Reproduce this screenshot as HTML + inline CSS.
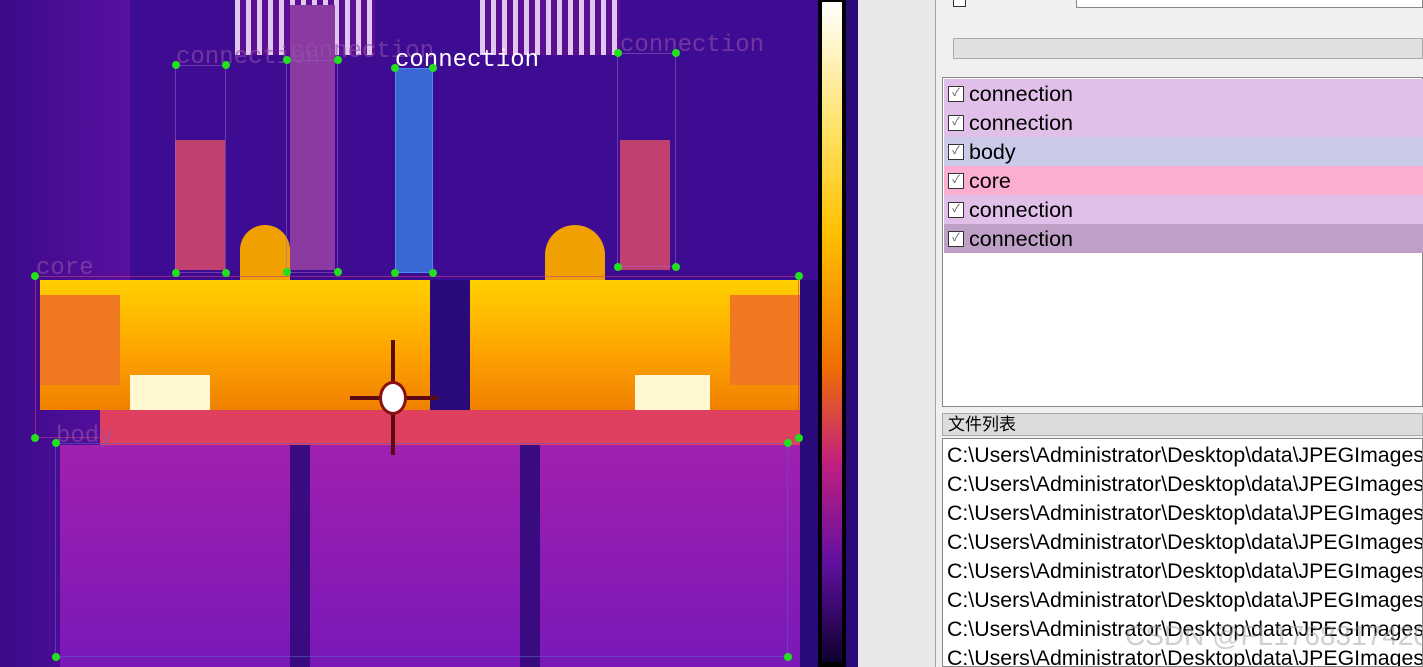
<!DOCTYPE html>
<html><head><meta charset="utf-8"><style>
*{margin:0;padding:0;box-sizing:border-box}
html,body{width:1423px;height:667px;overflow:hidden}
body{background:#f0f0f0;position:relative;font-family:"Liberation Sans","Noto Sans CJK SC",sans-serif}
.a{position:absolute}
.img{left:0;top:0;width:858px;height:667px;background:#2a0a78;overflow:hidden}
.d{position:absolute;width:8px;height:8px;border-radius:50%;background:#22e01e;margin:-4px 0 0 -4px}
.lbl{position:absolute;font-family:"Liberation Mono",monospace;font-size:24px;color:rgba(150,80,170,.6);white-space:nowrap}
.row{position:absolute;left:944px;width:479px;height:29px;font-size:21.5px;line-height:30px;padding-left:25px;color:#000}
.row:before{content:"✓";position:absolute;left:4px;top:7px;width:14px;height:14px;border:1px solid #333;background:#fff;font-size:11px;line-height:13px;text-align:center;color:#555}
.f{position:absolute;left:4px;font-size:21.3px;line-height:29px;white-space:nowrap;color:#000}
</style></head><body>
<div class="a img">
 <div class="a" style="left:0;top:0;width:130px;height:667px;background:linear-gradient(90deg,#3a0a8a,#5a10a0)"></div>
 <div class="a" style="left:130px;top:0;width:690px;height:280px;background:#3e0c92"></div>
 <div class="a" style="left:235px;top:0;width:140px;height:55px;background:repeating-linear-gradient(90deg,#e0c8f0 0 5px,#5a1090 5px 11px)"></div>
 <div class="a" style="left:480px;top:0;width:140px;height:55px;background:repeating-linear-gradient(90deg,#e0c8f0 0 5px,#5a1090 5px 11px)"></div>
 <div class="a" style="left:175px;top:140px;width:50px;height:130px;background:#c04070"></div>
 <div class="a" style="left:620px;top:140px;width:50px;height:130px;background:#c04070"></div>
 <div class="a" style="left:290px;top:5px;width:45px;height:265px;background:#8a3aa0"></div>
 <div class="a" style="left:240px;top:225px;width:50px;height:60px;background:#f0a000;border-radius:25px 25px 0 0"></div>
 <div class="a" style="left:545px;top:225px;width:60px;height:60px;background:#f0a000;border-radius:30px 30px 0 0"></div>
 <div class="a" style="left:40px;top:280px;width:390px;height:130px;background:linear-gradient(180deg,#ffd000,#ffa800 50%,#f08000);"></div>
 <div class="a" style="left:470px;top:280px;width:330px;height:130px;background:linear-gradient(180deg,#ffd000,#ffa800 50%,#f08000);"></div>
 <div class="a" style="left:40px;top:295px;width:80px;height:90px;background:#f07820"></div>
 <div class="a" style="left:730px;top:295px;width:70px;height:90px;background:#f07820"></div>
 <div class="a" style="left:130px;top:375px;width:80px;height:50px;background:#fff8d0"></div>
 <div class="a" style="left:635px;top:375px;width:75px;height:50px;background:#fff8d0"></div>
 <div class="a" style="left:100px;top:410px;width:700px;height:40px;background:#e04060"></div>
 <div class="a" style="left:60px;top:445px;width:740px;height:222px;background:linear-gradient(180deg,#a020b0,#7a18b8)"></div>
 <div class="a" style="left:290px;top:445px;width:20px;height:222px;background:#3a0a80"></div>
 <div class="a" style="left:520px;top:445px;width:20px;height:222px;background:#3a0a80"></div>
 <div class="a" style="left:395px;top:68px;width:38px;height:205px;background:#3a78e0;opacity:.85;border:1px solid #4aa0ff"></div>
 <div class="a" style="left:35px;top:276px;width:764px;height:162px;border:1px solid rgba(200,60,120,.6)"></div>
 <div class="a" style="left:55px;top:443px;width:733px;height:214px;border:1px solid rgba(90,90,200,.6)"></div>
 <div class="a" style="left:175px;top:65px;width:51px;height:208px;border:1px solid rgba(160,100,200,.5)"></div>
 <div class="a" style="left:286px;top:60px;width:52px;height:213px;border:1px solid rgba(160,100,200,.5)"></div>
 <div class="a" style="left:617px;top:53px;width:59px;height:214px;border:1px solid rgba(160,100,200,.5)"></div>
 <div class="a" style="left:391px;top:340px;width:4px;height:115px;background:#5a0a10"></div>
 <div class="a" style="left:350px;top:396px;width:88px;height:4px;background:#5a0a10"></div>
 <div class="a" style="left:379px;top:381px;width:28px;height:34px;background:#fff;border:3px solid #8a1010;border-radius:50%"></div>
 <div class="a" style="left:818px;top:0;width:28px;height:667px;background:#000"></div>
 <div class="a" style="left:822px;top:2px;width:20px;height:660px;background:linear-gradient(180deg,#fff,#ffe060 20%,#ffc000 35%,#f07000 55%,#c02080 70%,#6010a0 85%,#100030)"></div>
 <div class="a" style="left:846px;top:0;width:12px;height:667px;background:#2a0a78"></div>
 <div class="lbl" style="left:176px;top:44px">connection</div>
 <div class="lbl" style="left:290px;top:38px">connection</div>
 <div class="lbl" style="left:620px;top:32px">connection</div>
 <div class="lbl" style="left:36px;top:255px">core</div>
 <div class="lbl" style="left:56px;top:423px">body</div>
 <div class="lbl" style="left:395px;top:47px;color:#fff">connection</div>
 <div class="d" style="left:176px;top:65px"></div><div class="d" style="left:226px;top:65px"></div><div class="d" style="left:176px;top:273px"></div><div class="d" style="left:226px;top:273px"></div>
 <div class="d" style="left:287px;top:60px"></div><div class="d" style="left:338px;top:60px"></div><div class="d" style="left:287px;top:272px"></div><div class="d" style="left:338px;top:272px"></div>
 <div class="d" style="left:395px;top:68px"></div><div class="d" style="left:433px;top:68px"></div><div class="d" style="left:395px;top:273px"></div><div class="d" style="left:433px;top:273px"></div>
 <div class="d" style="left:618px;top:53px"></div><div class="d" style="left:676px;top:53px"></div><div class="d" style="left:618px;top:267px"></div><div class="d" style="left:676px;top:267px"></div>
 <div class="d" style="left:35px;top:276px"></div><div class="d" style="left:799px;top:276px"></div><div class="d" style="left:35px;top:438px"></div><div class="d" style="left:799px;top:438px"></div>
 <div class="d" style="left:56px;top:443px"></div><div class="d" style="left:788px;top:443px"></div><div class="d" style="left:56px;top:657px"></div><div class="d" style="left:788px;top:657px"></div>
</div>
<div class="a" style="left:858px;top:0;width:78px;height:667px;background:#e8e8e8;border-right:1px solid #a0a0a0"></div>
<div class="a" style="left:953px;top:-6px;width:13px;height:13px;border:1px solid #333;background:#fff"></div>
<div class="a" style="left:1076px;top:-2px;width:347px;height:10px;border:1px solid #888;background:#fff"></div>
<div class="a" style="left:953px;top:38px;width:470px;height:21px;border:1px solid #aaa;background:#e0e0e0"></div>
<div class="a" style="left:942px;top:77px;width:481px;height:330px;border:1px solid #888;background:#fff"></div>
<div class="row" style="top:79px;background:#e0bfe9">connection</div>
<div class="row" style="top:108px;background:#e0bfe9">connection</div>
<div class="row" style="top:137px;background:#cacbe9">body</div>
<div class="row" style="top:166px;background:#fbaed2">core</div>
<div class="row" style="top:195px;background:#e0bfe9">connection</div>
<div class="row" style="top:224px;background:#bea0c6">connection</div>
<div class="a" style="left:942px;top:413px;width:481px;height:23px;border:1px solid #aaa;background:#dcdcdc;font-size:17px;line-height:22px;padding-left:5px">文件列表</div>
<div class="a" style="left:942px;top:438px;width:481px;height:229px;border:1px solid #888;background:#fff;overflow:hidden">
<div class="f" style="top:2px">C:\Users\Administrator\Desktop\data\JPEGImages</div>
<div class="f" style="top:31px">C:\Users\Administrator\Desktop\data\JPEGImages</div>
<div class="f" style="top:60px">C:\Users\Administrator\Desktop\data\JPEGImages</div>
<div class="f" style="top:89px">C:\Users\Administrator\Desktop\data\JPEGImages</div>
<div class="f" style="top:118px">C:\Users\Administrator\Desktop\data\JPEGImages</div>
<div class="f" style="top:147px">C:\Users\Administrator\Desktop\data\JPEGImages</div>
<div class="f" style="top:176px">C:\Users\Administrator\Desktop\data\JPEGImages</div>
<div class="f" style="top:205px">C:\Users\Administrator\Desktop\data\JPEGImages</div>
</div>
<div class="a" style="left:1125px;top:620px;font-size:28px;color:rgba(160,160,160,.5);white-space:nowrap">CSDN @FL1768317420</div>
</body></html>
